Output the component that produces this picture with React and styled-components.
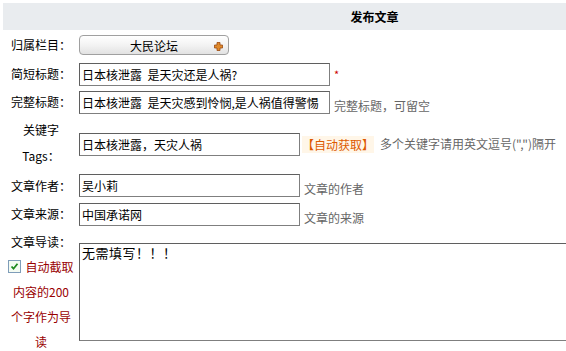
import styled, { createGlobalStyle } from 'styled-components';

const GlobalStyle = createGlobalStyle`
  html, body {
    margin: 0;
    padding: 0;
    overflow: hidden;
    background: #fff;
  }
  body {
    font-family: "Noto Sans CJK SC", "DejaVu Sans", sans-serif;
    font-size: 12px;
    color: #000;
  }
`;

const Page = styled.div`
  width: 743px;
  padding: 3px 0 0 3px;
`;

const Header = styled.div`
  height: 27px;
  background: #e9ecef;
  display: flex;
  align-items: center;
  justify-content: center;
  font-weight: bold;
  font-size: 12px;
  color: #000;
`;

const Form = styled.div`
  display: grid;
  grid-template-columns: 76px 1fr;
`;

const Label = styled.div`
  height: ${(p) => p.$h}px;
  display: flex;
  flex-direction: column;
  align-items: center;
  justify-content: ${(p) => (p.$top ? 'flex-start' : 'center')};
  line-height: ${(p) => p.$lh || 18}px;
  white-space: nowrap;
  padding-top: ${(p) => (p.$top ? 1 : 0)}px;
  box-sizing: border-box;
`;

const Field = styled.div`
  height: ${(p) => p.$h}px;
  display: flex;
  align-items: center;
  box-sizing: border-box;
`;

const SelectButton = styled.div`
  width: 150px;
  height: 20px;
  box-sizing: border-box;
  border: 1px solid #a0a0a0;
  border-radius: 4px;
  background: linear-gradient(#ffffff, #f3f3f3 50%, #e2e2e2);
  display: flex;
  align-items: center;
  justify-content: center;
  position: relative;
  font-size: 12px;
`;

const PlusIcon = styled.svg`
  position: absolute;
  right: 5px;
  top: 6px;
`;

const Input = styled.div`
  width: ${(p) => p.$w}px;
  height: 23px;
  box-sizing: border-box;
  border: 1px solid #7f7f7f;
  border-top-color: #5f5f5f;
  border-left-color: #5f5f5f;
  padding: 0 2px;
  display: flex;
  align-items: center;
  white-space: pre;
  overflow: hidden;
  font-size: 12px;
`;

const Required = styled.span`
  color: #cc0000;
  font-size: 11px;
  margin-left: 4px;
`;

const Hint = styled.span`
  color: #666;
  margin-left: ${(p) => p.$ml || 4}px;
  line-height: 16px;
  white-space: nowrap;
  align-self: ${(p) => (p.$low ? 'flex-end' : 'center')};
  margin-bottom: ${(p) => p.$low || 0}px;
`;

const AutoFetch = styled.span`
  color: #dd5a00;
  background: #fff6e8;
  margin-left: 2px;
  white-space: nowrap;
`;

const Intro = styled.div`
  display: flex;
  flex-direction: column;
  align-items: center;
  line-height: 25px;
  white-space: nowrap;
`;

const AutoCut = styled.span`
  color: #990000;
  display: flex;
  align-items: center;
`;

const CheckBox = styled.span`
  display: inline-flex;
  width: 11px;
  height: 11px;
  border: 1px solid #7f9db9;
  background: #f4fbf2;
  margin-right: 4px;
  align-items: center;
  justify-content: center;
`;

const TextArea = styled.div`
  margin-top: 14px;
  height: 98px;
  box-sizing: border-box;
  border: 1px solid #7f7f7f;
  border-top-color: #5f5f5f;
  border-left-color: #5f5f5f;
  border-right: none;
  padding: 1px 2px;
  font-size: 13px;
  line-height: 16px;
  letter-spacing: 0.5px;
`;

export default function App() {
  return (
    <>
      <GlobalStyle />
      <Page>
        <Header>发布文章</Header>
        <Form>
          <Label $h={30}>归属栏目：</Label>
          <Field $h={30}>
            <SelectButton>
              大民论坛
              <PlusIcon width="9" height="9" viewBox="0 0 9 9">
                <path d="M3 0.5h3v2.5h2.5v3h-2.5v2.5h-3v-2.5h-2.5v-3h2.5z" fill="#e08a2c" stroke="#9a4a10" strokeWidth="0.8" />
              </PlusIcon>
            </SelectButton>
          </Field>

          <Label $h={28}>简短标题：</Label>
          <Field $h={28}>
            <Input $w={251}>日本核泄露  是天灾还是人祸?</Input>
            <Required>*</Required>
          </Field>

          <Label $h={28}>完整标题：</Label>
          <Field $h={28}>
            <Input $w={251}>日本核泄露  是天灾感到怜悯,是人祸值得警惕</Input>
            <Hint $low={2}>完整标题，可留空</Hint>
          </Field>

          <Label $h={56} $lh={26} $top>
            <span>关键字</span>
            <span>Tags：</span>
          </Label>
          <Field $h={56}>
            <Input $w={221}>日本核泄露，天灾人祸</Input>
            <AutoFetch>【自动获取】</AutoFetch>
            <Hint $ml={6}>多个关键字请用英文逗号(",")隔开</Hint>
          </Field>

          <Label $h={27}>文章作者：</Label>
          <Field $h={27}>
            <Input $w={221}>吴小莉</Input>
            <Hint $low={2}>文章的作者</Hint>
          </Field>

          <Label $h={30}>文章来源：</Label>
          <Field $h={30}>
            <Input $w={221}>中国承诺网</Input>
            <Hint $low={3}>文章的来源</Hint>
          </Field>

          <Intro>
            <span>文章导读：</span>
            <AutoCut>
              <CheckBox>
                <svg width="9" height="9" viewBox="0 0 9 9">
                  <path d="M1.5 4.5l2 2.2 4-5" fill="none" stroke="#1e8a1e" strokeWidth="1.8" />
                </svg>
              </CheckBox>
              自动截取
            </AutoCut>
            <AutoCut>内容的200</AutoCut>
            <AutoCut>个字作为导</AutoCut>
            <AutoCut>读</AutoCut>
          </Intro>
          <div>
            <TextArea>无需填写！！！</TextArea>
          </div>
        </Form>
      </Page>
    </>
  );
}
